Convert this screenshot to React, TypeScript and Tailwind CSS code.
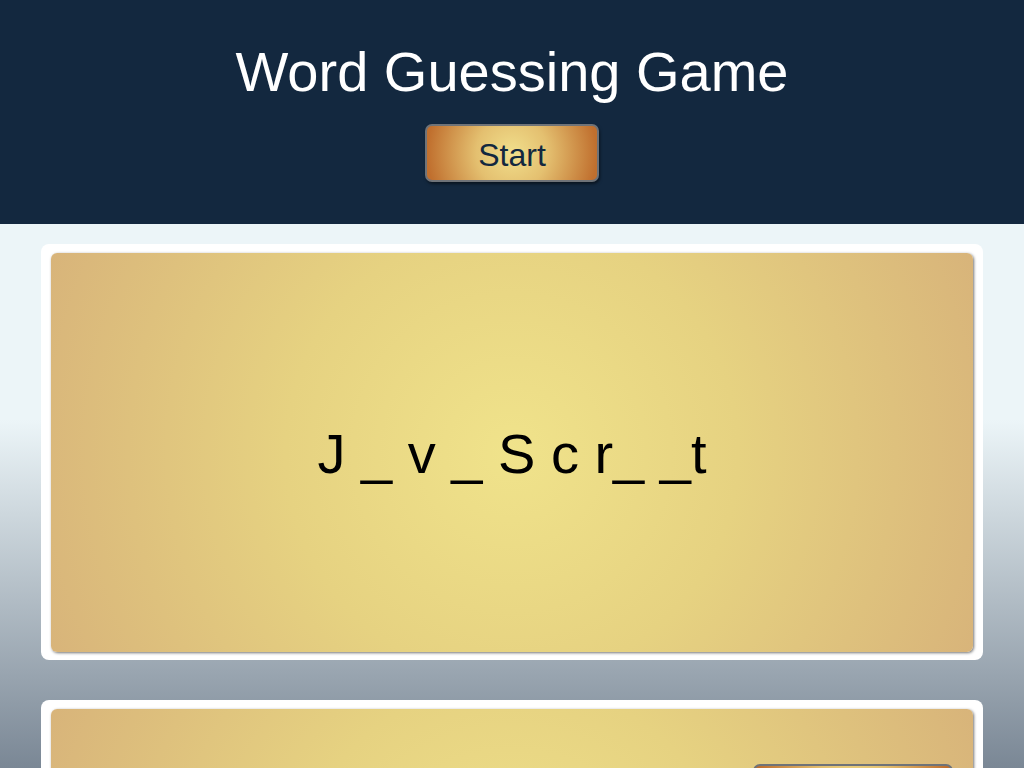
import React from "react";

export default function App() {
  const font = { fontFamily: '"Liberation Sans", Arial, sans-serif' };
  return (
    <div
      className="h-screen w-full overflow-hidden flex flex-col"
      style={font}
    >
      <header className="h-[224px] shrink-0 bg-[#13283f] flex flex-col items-center">
        <h1 className="mt-[38px] text-[56px] leading-[68px] text-white font-normal">
          Word Guessing Game
        </h1>
        <button className="mt-[18px] w-[174px] h-[58px] pt-[3px] rounded-[7px] border-2 border-[#6f7378] bg-[radial-gradient(circle,#f1df8c_0%,#e4c070_40%,#c06f2e_95%)] text-[32px] text-[#13283f] leading-none shadow-[1px_2px_3px_rgba(0,0,0,0.5)]">
          Start
        </button>
      </header>
      <main className="flex-1 overflow-hidden bg-[linear-gradient(180deg,#ecf5f8_0%,#ecf5f8_36%,#7a8795_100%)] px-[41px] pt-[20px] flex flex-col gap-[40px]">
        <section className="shrink-0 bg-white rounded-[8px] pt-[9px] pb-[8px] px-[10px]">
          <div className="h-[399px] rounded-[6px] bg-[radial-gradient(circle,#f0e38b_0%,#e6d281_45%,#d8b47a_100%)] shadow-[1px_1px_3px_rgba(0,0,0,0.55)] flex items-center justify-center">
            <p className="text-[56px] text-black leading-none mt-[3px] whitespace-pre">
              J _ v _ S c r_ _t
            </p>
          </div>
        </section>
        <section className="shrink-0 bg-white rounded-[8px] pt-[9px] pb-[8px] px-[10px]">
          <div className="h-[399px] rounded-[6px] bg-[radial-gradient(circle,#f0e38b_0%,#e6d281_45%,#d8b47a_100%)] shadow-[1px_1px_3px_rgba(0,0,0,0.55)] flex justify-end pr-[20px] pt-[55px]">
            <button
              aria-label="Guess"
              className="w-[200px] h-[58px] rounded-[7px] border-2 border-[#6f7378] bg-[radial-gradient(circle,#f1df8c_0%,#e4c070_40%,#c06f2e_95%)]"
            />
          </div>
        </section>
      </main>
    </div>
  );
}
